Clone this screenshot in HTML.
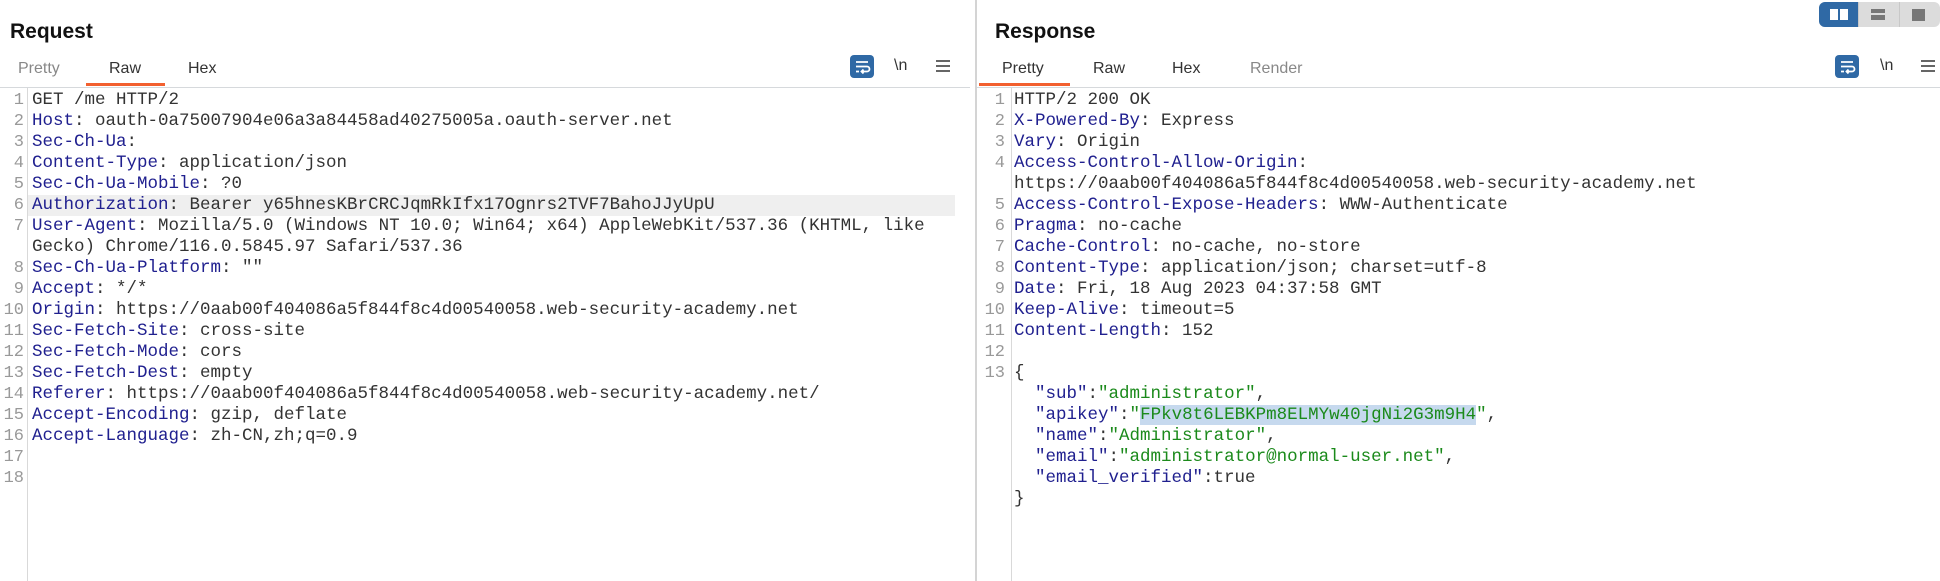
<!DOCTYPE html>
<html><head><meta charset="utf-8"><style>
*{margin:0;padding:0;box-sizing:border-box}
body{width:1940px;height:581px;background:#fff;position:relative;overflow:hidden;font-family:"Liberation Sans",sans-serif;color:#222}
.abs{position:absolute}
.title{font-weight:bold;font-size:21px;top:20px;color:#111}
.tab{font-size:16px;top:60px;color:#333}
.tab.dim{color:#888}
.ul{height:3px;background:#f2602f;top:83px}
.sep{height:1px;background:#d6d9dc;top:87px}
.vline{width:1px;background:#d9d9d9;top:88px;bottom:0}
.code{font-family:"Liberation Mono",monospace;font-size:17.5px;line-height:21px;white-space:pre;color:#333}
.num{font-family:"Liberation Mono",monospace;font-size:17px;line-height:21px;color:#999;text-align:right;white-space:pre}
.k{color:#20208f}
.g{color:#1b8a1b}
.hl{background:#c6d9ee}
.wrapi{width:24px;height:23px;background:#2f69a5;border-radius:4px}
.nl{font-size:16px;color:#333}
</style></head><body>
<div class="abs title" style="left:10px">Request</div>
<div class="abs title" style="left:995px">Response</div>

<div class="abs tab dim" style="left:18px">Pretty</div>
<div class="abs tab" style="left:109px">Raw</div>
<div class="abs tab" style="left:188px">Hex</div>
<div class="abs ul" style="left:86px;width:79px"></div>
<div class="abs sep" style="left:0;width:970px"></div>

<div class="abs tab" style="left:1002px">Pretty</div>
<div class="abs tab" style="left:1093px">Raw</div>
<div class="abs tab" style="left:1172px">Hex</div>
<div class="abs tab dim" style="left:1250px">Render</div>
<div class="abs ul" style="left:979px;width:91px"></div>
<div class="abs sep" style="left:977px;width:963px"></div>

<div class="abs" style="left:975px;top:0;width:2px;height:581px;background:#d4d4d4"></div>

<div class="abs wrapi" style="left:850px;top:55px"><svg width="24" height="23" viewBox="0 0 24 23"><path d="M6 7h12M6 11.5h11a2.5 2.5 0 0 1 0 5h-5M13.5 14.5l-2 2 2 2M6 16.5h3" stroke="#fff" stroke-width="1.8" fill="none"/></svg></div>
<div class="abs nl" style="left:894px;top:57px">\n</div>
<svg class="abs" style="left:936px;top:60px" width="14" height="12"><path d="M0 1h14M0 6h14M0 11h14" stroke="#333" stroke-width="1.6"/></svg>
<div class="abs wrapi" style="left:1835px;top:55px"><svg width="24" height="23" viewBox="0 0 24 23"><path d="M6 7h12M6 11.5h11a2.5 2.5 0 0 1 0 5h-5M13.5 14.5l-2 2 2 2M6 16.5h3" stroke="#fff" stroke-width="1.8" fill="none"/></svg></div>
<div class="abs nl" style="left:1880px;top:57px">\n</div>
<svg class="abs" style="left:1921px;top:60px" width="14" height="12"><path d="M0 1h14M0 6h14M0 11h14" stroke="#333" stroke-width="1.6"/></svg>

<div class="abs" style="left:1819px;top:2px;width:121px;height:25px;background:#dcdcdc;border-radius:6px;overflow:hidden">
<div class="abs" style="left:0;top:0;width:39px;height:25px;background:#2f69a5"></div>
<div class="abs" style="left:11px;top:7px;width:8px;height:11px;background:#fff"></div>
<div class="abs" style="left:21px;top:7px;width:8px;height:11px;background:#fff"></div>
<div class="abs" style="left:39px;top:0;width:1px;height:25px;background:#c8c8c8"></div>
<div class="abs" style="left:52px;top:7px;width:14px;height:4px;background:#777"></div>
<div class="abs" style="left:52px;top:13px;width:14px;height:5px;background:#777"></div>
<div class="abs" style="left:80px;top:0;width:1px;height:25px;background:#c8c8c8"></div>
<div class="abs" style="left:93px;top:7px;width:13px;height:12px;background:#777"></div>
</div>

<div class="abs vline" style="left:27px"></div>
<div class="abs" style="left:28px;top:195px;width:927px;height:21px;background:#efefef"></div>
<div class="abs num" style="left:0;top:90px;width:24px">1
2
3
4
5
6
7

8
9
10
11
12
13
14
15
16
17
18</div>
<div class="abs code" style="left:32px;top:90px">GET /me HTTP/2
<span class="k">Host</span>: oauth-0a75007904e06a3a84458ad40275005a.oauth-server.net
<span class="k">Sec-Ch-Ua</span>:
<span class="k">Content-Type</span>: application/json
<span class="k">Sec-Ch-Ua-Mobile</span>: ?0
<span class="k">Authorization</span>: Bearer y65hnesKBrCRCJqmRkIfx17Ognrs2TVF7BahoJJyUpU
<span class="k">User-Agent</span>: Mozilla/5.0 (Windows NT 10.0; Win64; x64) AppleWebKit/537.36 (KHTML, like
Gecko) Chrome/116.0.5845.97 Safari/537.36
<span class="k">Sec-Ch-Ua-Platform</span>: ""
<span class="k">Accept</span>: */*
<span class="k">Origin</span>: https://0aab00f404086a5f844f8c4d00540058.web-security-academy.net
<span class="k">Sec-Fetch-Site</span>: cross-site
<span class="k">Sec-Fetch-Mode</span>: cors
<span class="k">Sec-Fetch-Dest</span>: empty
<span class="k">Referer</span>: https://0aab00f404086a5f844f8c4d00540058.web-security-academy.net/
<span class="k">Accept-Encoding</span>: gzip, deflate
<span class="k">Accept-Language</span>: zh-CN,zh;q=0.9</div>

<div class="abs vline" style="left:1011px"></div>
<div class="abs num" style="left:980px;top:90px;width:25px">1
2
3
4

5
6
7
8
9
10
11
12
13</div>
<div class="abs code" style="left:1014px;top:90px">HTTP/2 200 OK
<span class="k">X-Powered-By</span>: Express
<span class="k">Vary</span>: Origin
<span class="k">Access-Control-Allow-Origin</span>:
https://0aab00f404086a5f844f8c4d00540058.web-security-academy.net
<span class="k">Access-Control-Expose-Headers</span>: WWW-Authenticate
<span class="k">Pragma</span>: no-cache
<span class="k">Cache-Control</span>: no-cache, no-store
<span class="k">Content-Type</span>: application/json; charset=utf-8
<span class="k">Date</span>: Fri, 18 Aug 2023 04:37:58 GMT
<span class="k">Keep-Alive</span>: timeout=5
<span class="k">Content-Length</span>: 152

{
  <span class="k">"sub"</span>:<span class="g">"administrator"</span>,
  <span class="k">"apikey"</span>:<span class="g">"<span class="hl">FPkv8t6LEBKPm8ELMYw40jgNi2G3m9H4</span>"</span>,
  <span class="k">"name"</span>:<span class="g">"Administrator"</span>,
  <span class="k">"email"</span>:<span class="g">"administrator@normal-user.net"</span>,
  <span class="k">"email_verified"</span>:true
}</div>
</body></html>
